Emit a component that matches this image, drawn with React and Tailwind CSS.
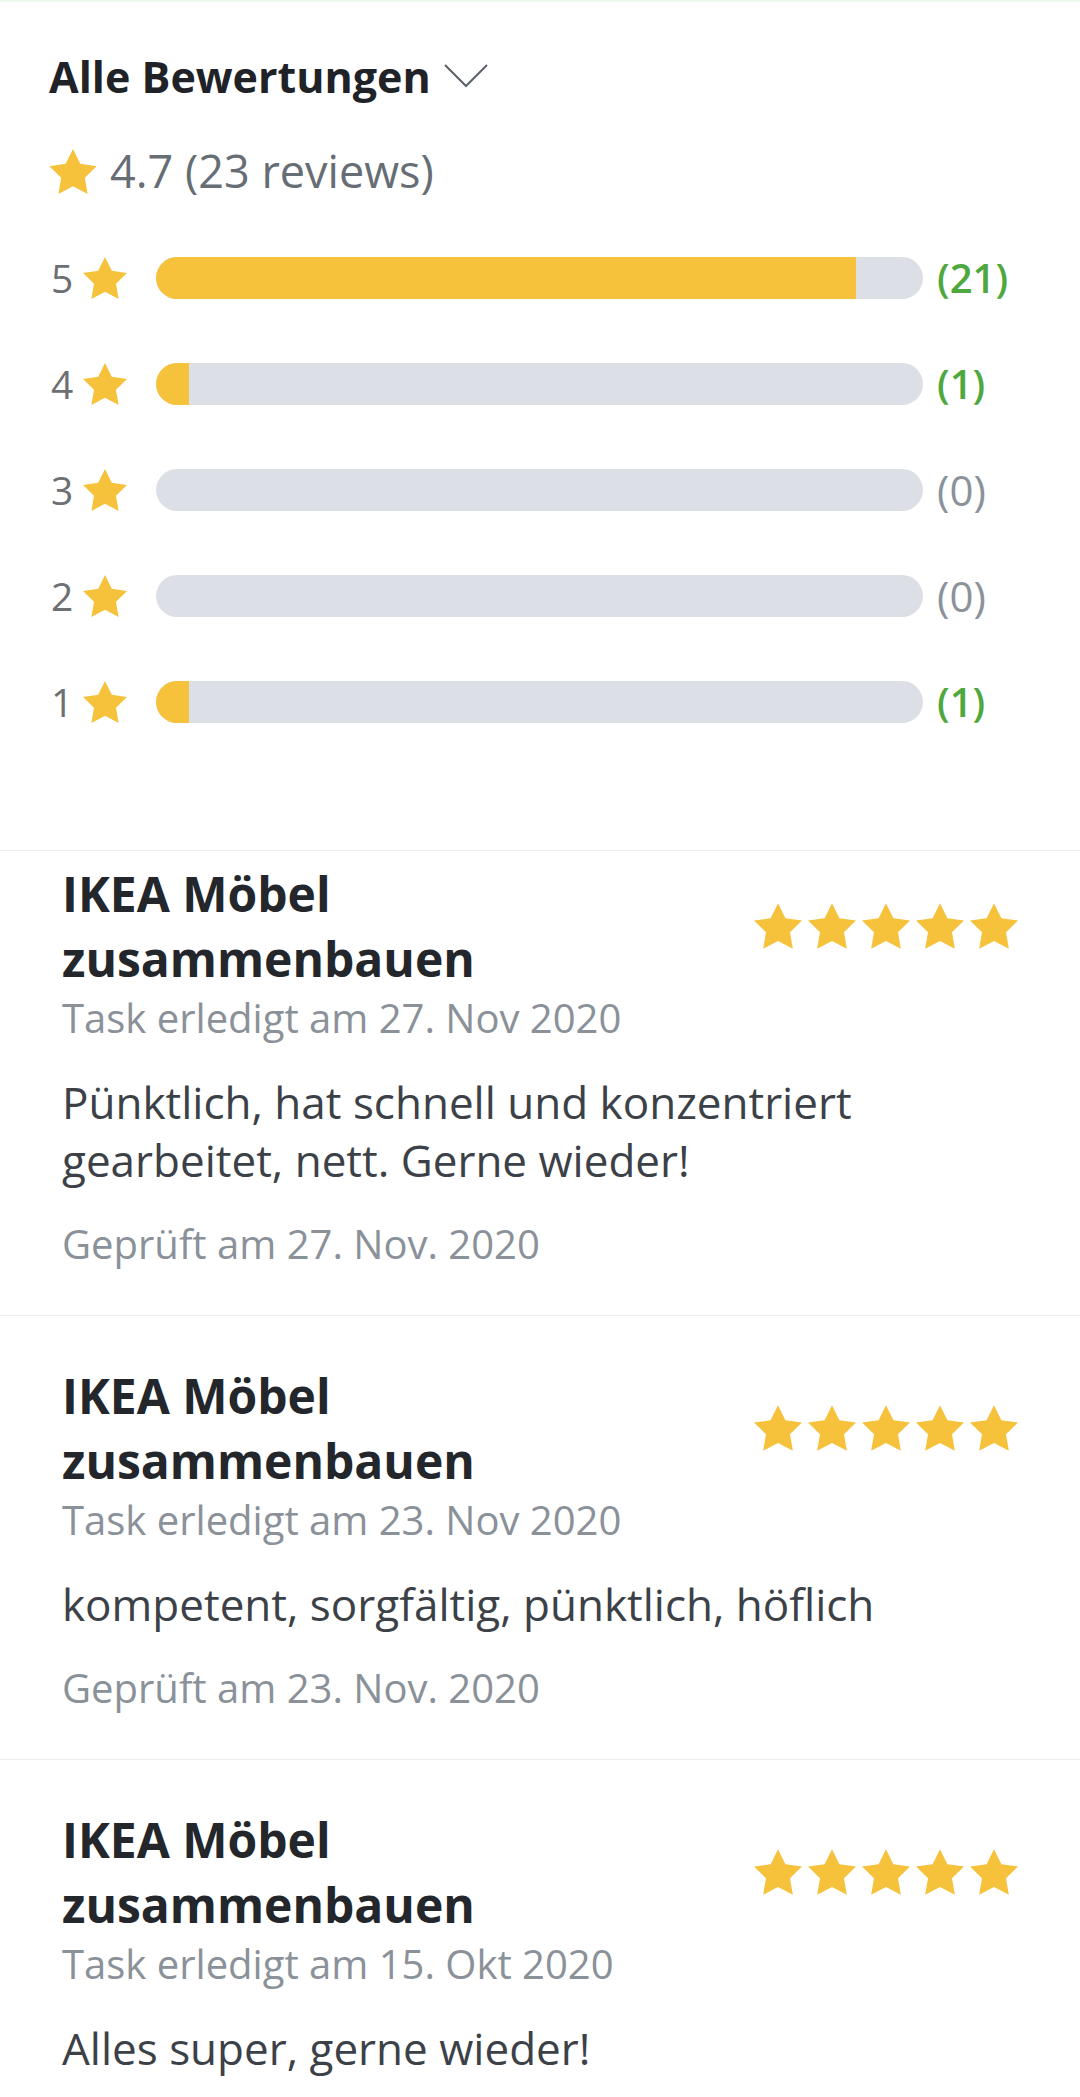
const STAR = 'M12 2l3.09 6.26L22 9.27l-5 4.87 1.18 6.88L12 17.77l-6.18 3.25L7 14.14 2 9.27l6.91-1.01L12 2z'

const BARS = [
  { n: 5, count: 21 },
  { n: 4, count: 1 },
  { n: 3, count: 0 },
  { n: 2, count: 0 },
  { n: 1, count: 1 },
]
const TOTAL = 23

const REVIEWS = [
  {
    title: 'IKEA Möbel zusammenbauen',
    done: 'Task erledigt am 27. Nov 2020',
    text: 'Pünktlich, hat schnell und konzentriert gearbeitet, nett. Gerne wieder!',
    checked: 'Geprüft am 27. Nov. 2020',
  },
  {
    title: 'IKEA Möbel zusammenbauen',
    done: 'Task erledigt am 23. Nov 2020',
    text: 'kompetent, sorgfältig, pünktlich, höflich',
    checked: 'Geprüft am 23. Nov. 2020',
  },
  {
    title: 'IKEA Möbel zusammenbauen',
    done: 'Task erledigt am 15. Okt 2020',
    text: 'Alles super, gerne wieder!',
  },
]

function Star({ className }) {
  return (
    <svg viewBox="2 2 20 19.02" className={className}>
      <path d={STAR} fill="#f6c23c" />
    </svg>
  )
}

function FiveStars() {
  return (
    <svg viewBox="0 0 110 19.02" className="w-[264px] h-[46px] shrink-0">
      {[0, 1, 2, 3, 4].map(i => (
        <path key={i} d={STAR} fill="#f6c23c" transform={`translate(${i * 22.5 - 2} -2)`} />
      ))}
    </svg>
  )
}

function Review({ r, first }) {
  return (
    <div className={`border-t border-[#ececec] px-[62px] ${first ? 'pt-[10px]' : 'pt-[47px]'} pb-[47px]`}>
      <div className="flex items-center justify-between">
        <h3 className="text-[48px] leading-[65px] font-bold text-[#23272c] w-[480px]">{r.title}</h3>
        <FiveStars />
      </div>
      <p className="mt-[3px] text-[40px] leading-[48px] text-[#8a9199]">{r.done}</p>
      <p className="mt-[31px] text-[44px] leading-[58px] text-[#3c4148]">{r.text}</p>
      {r.checked && (
        <p className="mt-[31px] text-[40px] leading-[48px] text-[#8a9199]">{r.checked}</p>
      )}
    </div>
  )
}

export default function App() {
  return (
    <div className="w-[1080px] min-h-[2097px] bg-white border-t-2 border-[#eef8ea] font-['Open_Sans','Liberation_Sans',sans-serif] overflow-hidden">
      {/* Summary */}
      <div className="px-[49px] pt-[51px] pb-[127px]">
        <div className="flex items-center h-[48px]">
          <h2 className="text-[43px] font-bold text-[#1f2328] leading-[48px]">Alle Bewertungen</h2>
          <svg viewBox="0 0 44 24" className="w-[44px] h-[24px] ml-[13px] mt-[-2px]" fill="none" stroke="#5b6068" strokeWidth="2">
            <path d="M1 1l21 21L43 1" />
          </svg>
        </div>

        <div className="flex items-center mt-[46px] h-[48px]">
          <Star className="w-[48px] h-[45px]" />
          <span className="ml-[13px] text-[45px] leading-[48px] text-[#676d75]">4.7 (23 reviews)</span>
        </div>

        <div className="mt-[62px] flex flex-col gap-[64px]">
          {BARS.map(b => (
            <div key={b.n} className="flex items-center h-[42px]">
              <span className="w-[22px] ml-[2px] text-[39px] leading-[42px] text-[#6d6f73]">{b.n}</span>
              <Star className="ml-[10px] w-[44px] h-[42px]" />
              <div className="ml-[29px] w-[767px] h-[42px] rounded-full bg-[#dcdfe5] overflow-hidden">
                <div className="h-full bg-[#f6c23c]" style={{ width: `${(b.count / TOTAL) * 100}%` }} />
              </div>
              <span className={`ml-[14px] leading-[42px] ${b.count > 0 ? 'text-[40px] text-[#4fa83d] font-semibold' : 'text-[42px] text-[#8b929a] font-medium'}`}>
                ({b.count})
              </span>
            </div>
          ))}
        </div>
      </div>

      {/* Reviews */}
      {REVIEWS.map((r, i) => (
        <Review key={i} r={r} first={i === 0} />
      ))}
    </div>
  )
}
